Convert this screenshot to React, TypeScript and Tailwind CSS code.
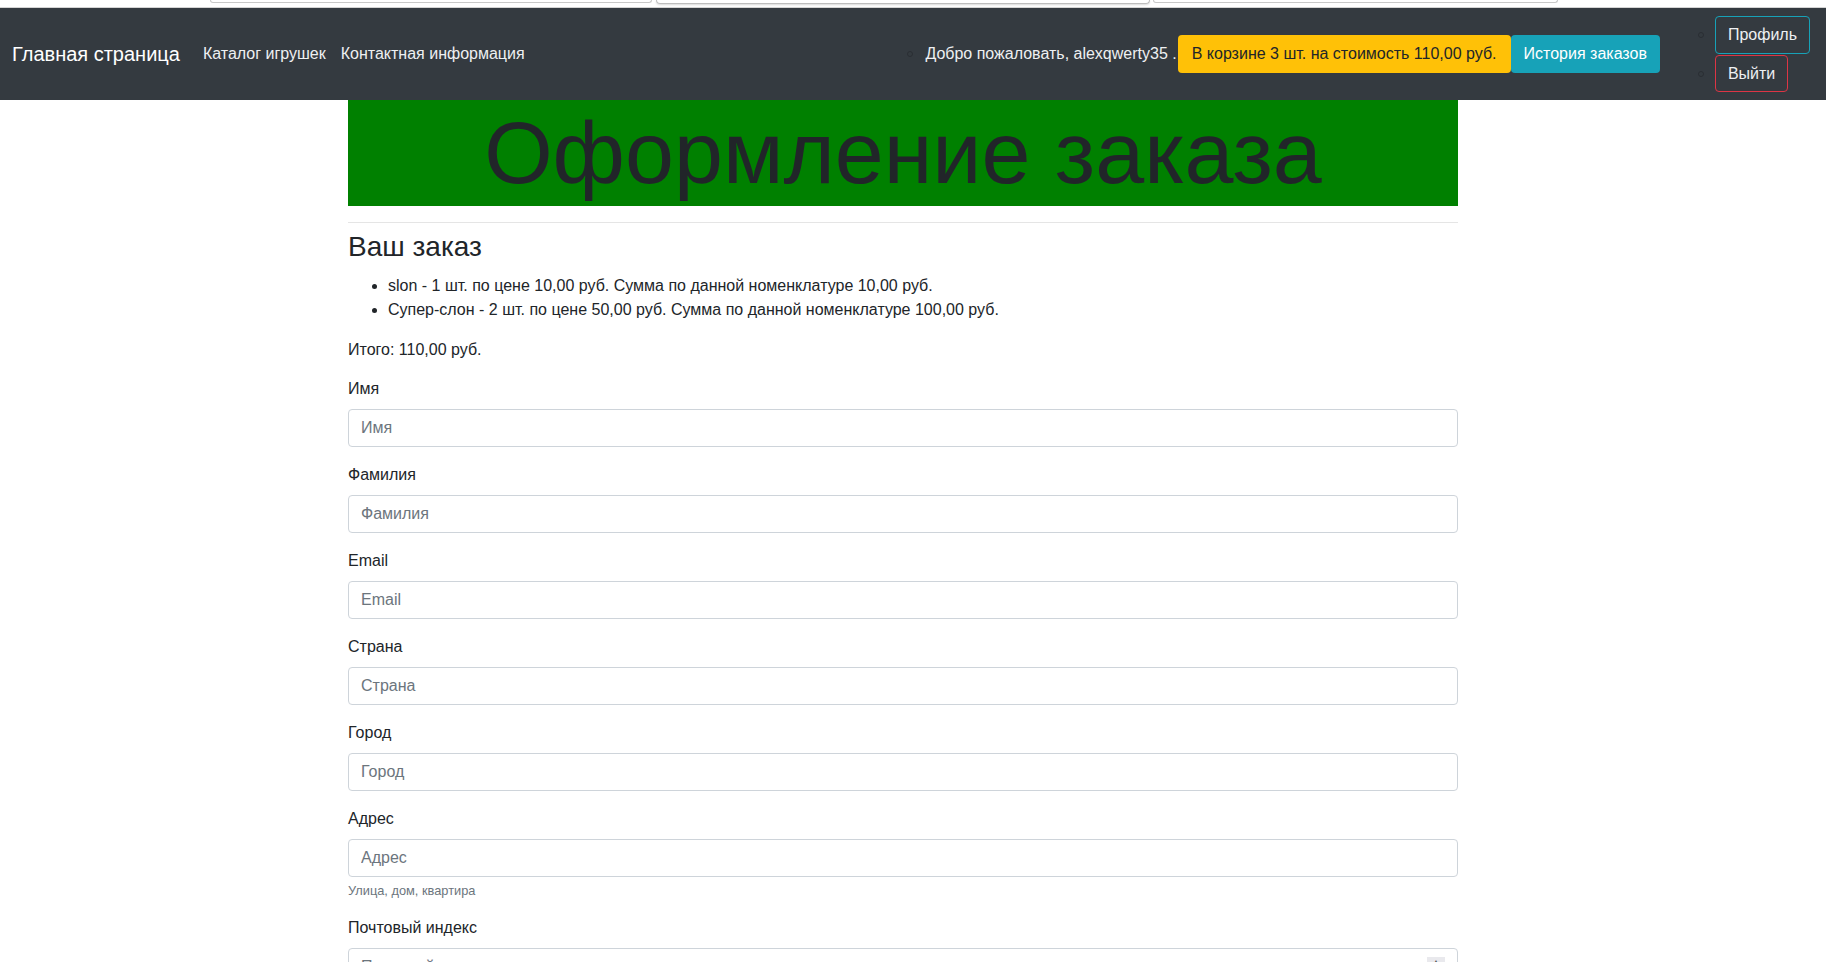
import React from "react";

const fields: { label: string; type?: string; help?: string }[] = [
  { label: "Имя" },
  { label: "Фамилия" },
  { label: "Email", type: "email" },
  { label: "Страна" },
  { label: "Город" },
  { label: "Адрес", help: "Улица, дом, квартира" },
];

export default function App() {
  return (
    <div className="font-['Liberation_Sans',Arial,sans-serif] text-[#212529] bg-white min-h-screen">
      {/* top strip */}
      <div className="h-[8px] bg-white border-b border-[#d4d4d4] flex">
        <div className="ml-[210px] w-[442px] h-[3px] border-b border-x border-[#c8c8c8] rounded-b-[3px]" />
        <div className="ml-[4px] w-[494px] h-[4px] border-b border-x border-[#bdbdbd] rounded-b-[4px] shadow-[0_1px_2px_rgba(0,0,0,0.15)]" />
        <div className="ml-[3px] w-[405px] h-[3px] border-b border-x border-[#c8c8c8] rounded-b-[3px]" />
      </div>

      {/* navbar */}
      <nav className="h-[92px] bg-[#343a40] flex items-center pl-[12px] pr-[16px]">
        <a className="text-[20px] text-white leading-[30px] mr-[23px]">Главная страница</a>
        <a className="text-[16px] text-[#eef0f2] leading-[24px] mr-[15px]">Каталог игрушек</a>
        <a className="text-[16px] text-[#eef0f2] leading-[24px]">Контактная информация</a>

        <div className="ml-auto flex items-center">
          <span className="w-[6px] h-[6px] rounded-full border border-[#2a2e33] mr-[12px]" />
          <span className="text-[16px] text-[#eef0f2] leading-[24px] whitespace-pre">Добро пожаловать, alexqwerty35 .</span>
          <button className="ml-[1px] h-[38px] px-[14px] bg-[#ffc107] text-[#212529] text-[16px] rounded-[4px] whitespace-nowrap">
            В корзине 3 шт. на стоимость 110,00 руб.
          </button>
          <button className="h-[38px] px-[13px] bg-[#17a2b8] text-white text-[16px] rounded-[4px] whitespace-nowrap">
            История заказов
          </button>
        </div>

        <div className="ml-[38px] flex flex-col gap-[1px]">
          <div className="flex items-center">
            <span className="w-[6px] h-[6px] rounded-full border border-[#2a2e33] mr-[11px]" />
            <button className="h-[38px] px-[12px] border border-[#17a2b8] text-[#eef0f2] text-[16px] rounded-[4px]">
              Профиль
            </button>
          </div>
          <div className="flex items-center">
            <span className="w-[6px] h-[6px] rounded-full border border-[#2a2e33] mr-[11px]" />
            <button className="h-[37px] px-[12px] border border-[#dc3545] text-[#eef0f2] text-[16px] rounded-[4px]">
              Выйти
            </button>
          </div>
        </div>
      </nav>

      {/* content */}
      <div className="w-[1110px] ml-[348px]">
        <h1 className="bg-[#008000] h-[106px] text-center text-[88px] leading-[1.2] font-light text-[#212529]">
          Оформление заказа
        </h1>
        <hr className="mt-[16px] border-0 border-t border-black/10" />
        <h3 className="mt-[7px] text-[28px] leading-[1.2] mb-[10px]">Ваш заказ</h3>
        <ul className="pl-[40px] list-disc text-[16px] leading-[24px] mb-[16px]">
          <li>slon - 1 шт. по цене 10,00 руб. Сумма по данной номенклатуре 10,00 руб.</li>
          <li>Супер-слон - 2 шт. по цене 50,00 руб. Сумма по данной номенклатуре 100,00 руб.</li>
        </ul>
        <p className="text-[16px] leading-[24px] mb-[15px]">Итого: 110,00 руб.</p>

        {fields.map((f) => (
          <div key={f.label} className="mb-[16px]">
            <label className="block text-[16px] leading-[24px] mb-[8px]">{f.label}</label>
            <input
              type={f.type ?? "text"}
              placeholder={f.label}
              className="block w-full h-[38px] border border-[#ced4da] rounded-[4px] px-[12px] text-[16px] text-[#495057] placeholder:text-[#6c757d] outline-none"
            />
            {f.help && (
              <small className="block mt-[4px] text-[12.8px] leading-[19.2px] text-[#6c757d]">{f.help}</small>
            )}
          </div>
        ))}

        <div className="mb-[16px]">
          <label className="block text-[16px] leading-[24px] mb-[8px]">Почтовый индекс</label>
          <div className="relative">
            <input
              type="text"
              placeholder="Почтовый индекс"
              className="block w-full h-[38px] border border-[#ced4da] rounded-[4px] px-[12px] text-[16px] text-[#495057] placeholder:text-[#6c757d] outline-none"
            />
            <div className="absolute right-[13px] top-[9px] w-[18px] h-[20px] bg-[#e9e9ed] flex flex-col items-center justify-around">
              <span className="text-[7px] leading-none text-[#555]">▲</span>
              <span className="text-[7px] leading-none text-[#555]">▼</span>
            </div>
          </div>
        </div>
      </div>
    </div>
  );
}
